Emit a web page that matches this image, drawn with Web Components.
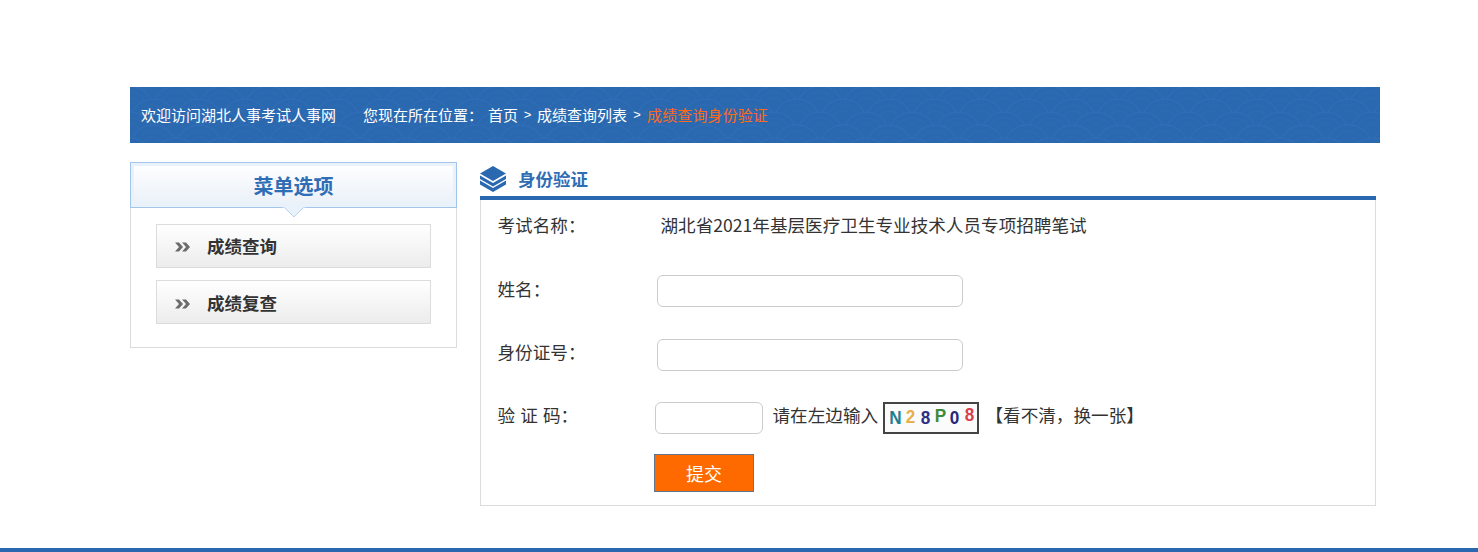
<!DOCTYPE html>
<html lang="zh-CN"><head><meta charset="utf-8">
<style>
html,body{margin:0;padding:0;background:#fff}
body{font-family:"Noto Sans CJK SC","Liberation Sans",sans-serif;color:#333;height:552px;overflow:hidden;display:flex;flex-direction:column}
</style></head><body>
<page-shell>
  <crumb-bar slot="top"></crumb-bar>
  <side-menu slot="side"></side-menu>
  <verify-panel slot="main"></verify-panel>
</page-shell>
<script>
function def(name, html){
  customElements.define(name, class extends HTMLElement{
    constructor(){super();this.attachShadow({mode:'open'}).innerHTML=html;}
  });
}
def('page-shell',`<style>
:host{display:flex;flex-direction:column;height:552px;box-sizing:border-box;padding-top:87px}
.wrap{width:1250px;margin-left:130px}
.cols{display:flex;margin-top:19px;align-items:flex-start}
.side{width:327px;margin-right:23px;flex:none}
.main{width:896px;flex:none}
.foot{margin-top:auto;height:4px;background:#2a68b0}
</style>
<div class="wrap"><slot name="top"></slot>
<div class="cols"><div class="side"><slot name="side"></slot></div><div class="main"><slot name="main"></slot></div></div></div>
<div class="foot"></div>`);

const sc=[[0,0],[46,0],[23,13],[0,26],[46,26],[23,39],[0,52],[46,52]].map(([x,y])=>
 `<circle cx="${x}" cy="${y}" r="23" fill="#2a68b0" stroke="#3070b9"/><circle cx="${x}" cy="${y}" r="17" stroke="#2d6bb4"/><circle cx="${x}" cy="${y}" r="11" stroke="#2d6bb4"/>`).join('');
def('crumb-bar',`<style>
:host{display:block;position:relative;height:56px;background:#2a68b0;color:#fff;font-size:15px;overflow:hidden}
svg{position:absolute;inset:0;width:100%;height:100%}
.t{position:relative;display:flex;box-sizing:border-box;height:56px;align-items:center;padding:0 0 2px 11px;white-space:nowrap}
.w{width:222px;flex:none}
.l{width:125px;flex:none}
.g{width:19px;text-align:center;flex:none;font-family:"Liberation Sans",sans-serif;font-size:13px}
.g.e{width:20px}
.o{color:#ff6a1a;letter-spacing:.12px}
</style>
<svg aria-hidden="true"><defs><pattern id="w" width="46" height="26" patternUnits="userSpaceOnUse" y="-4">
<g stroke-width="1" fill="none">${sc}</g></pattern></defs>
<rect width="100%" height="100%" fill="url(#w)"/></svg>
<div class="t"><span class="w">欢迎访问湖北人事考试人事网</span><span class="l">您现在所在位置：</span><span>首页</span><span class="g">&gt;</span><span>成绩查询列表</span><span class="g e">&gt;</span><span class="o">成绩查询身份验证</span></div>`);

def('menu-item',`<style>
:host{display:flex;align-items:center;box-sizing:border-box;width:275px;height:44px;margin-left:25px;border:1px solid #dcdcdc;background:linear-gradient(#fff,#ececec);color:#333;font-size:17.5px;font-weight:700}
svg{width:15px;height:10px;margin:3px 17px 0 18px;flex:none}
</style>
<svg viewBox="0 0 15 10"><path d="M0 .5h4L8 5 4 9.5H0L4 5zM7 .5h4L15 5l-4 4.5H7L11 5z" fill="#6b6b6b"/></svg><slot></slot>`);

def('side-menu',`<style>
:host{display:block;position:relative;box-sizing:border-box;height:186px;border:1px solid #dcdcdc;border-top:0}
.h{position:relative;box-sizing:border-box;height:46px;margin:0 -1px;border:1px solid #a3c5ea;box-shadow:inset 0 0 0 3px #e9f1fb;background:linear-gradient(#fff,#e9f0f8);text-align:center;color:#2f6db5;font-size:20px;font-weight:700;line-height:46px}
.a{position:absolute;left:151px;top:44px;width:24px;height:12px}
.list{display:flex;flex-direction:column;gap:12px;padding-top:16px}
</style>
<div class="h">菜单选项</div>
<svg class="a" viewBox="0 0 24 12"><path d="M1 0L12 11 23 0z" fill="#e9f1fb" stroke="#b7d2f0" stroke-width="1"/><path d="M0 0h24v1.4H0z" fill="#e9f1fb"/></svg>
<div class="list"><menu-item style="padding-bottom:1px">成绩查询</menu-item><menu-item>成绩复查</menu-item></div>`);

def('text-field',`<style>
:host{display:inline-block;line-height:0;margin-top:6.5px}
input{box-sizing:border-box;width:var(--w,306px);height:32px;margin:0;border:1px solid #ccc;border-radius:6px;background:#fff;outline:0;padding:0 8px}
</style><input type="text">`);

def('form-row',`<style>
:host{display:flex;align-items:center;height:32px;color:#333;font-size:17.6px;white-space:nowrap}
.l{width:var(--lw,159px);flex:none}
.c{display:flex;align-items:center}
</style><span class="l"><slot name="label"></slot></span><div class="c"><slot></slot></div>`);

def('captcha-box',`<style>
:host{display:flex;box-sizing:border-box;width:96px;height:32px;margin-top:6.5px;border:2px solid #444;background:#fbfbfb;padding-left:3px;font:700 19px/28px "Liberation Sans",sans-serif;overflow:hidden}
span{display:block;width:15px;text-align:center;position:relative;transform:scaleX(.9)}
</style><span style="color:#1f7f92;top:0">N</span><span style="color:#e8b04a;top:-1px">2</span><span style="color:#2e2d84;top:0">8</span><span style="color:#3f8a3a;top:-2px">P</span><span style="color:#27247a;top:0">0</span><span style="color:#d8404e;top:-3px">8</span>`);

def('verify-panel',`<style>
:host{display:block}
.t{display:flex;align-items:center;box-sizing:border-box;height:34px;padding-bottom:1px;color:#2f6db5;font-size:17.5px;font-weight:700}
.t svg{width:26px;height:26px;margin-right:12px;flex:none}
.b{box-sizing:border-box;height:306px;border:1px solid #dcdcdc;border-top:0}
.bar{height:4px;background:#2a68b0}
.f{display:flex;flex-direction:column;padding:8px 0 0 16.5px}
form-row{margin-bottom:31.67px}
form-row.a{margin-bottom:32px}
form-row.b2{margin-bottom:31.33px}
.sp{word-spacing:1.2px}
.hint{margin:0 5px 0 10px}
.sw{margin-left:6.4px}
.btn{box-sizing:border-box;width:100px;height:38px;margin:-8.67px 0 0 156.5px;border:1px solid #5f7590;background:#ff6a00;color:#fff;font:18px "Noto Sans CJK SC",sans-serif;padding:0}
</style>
<div class="t"><svg viewBox="0 0 26 26"><path d="M13 0L26 7.5 13 15 0 7.5z" fill="#2a68b0"/><path d="M0 9.4L13 16.9 26 9.4V13L13 20.5 0 13z" fill="#2a68b0"/><path d="M0 14.6L13 22.1 26 14.6V18.4L13 26 0 18.4z" fill="#2a68b0"/></svg><span>身份验证</span></div>
<div class="bar"></div>
<div class="b"><div class="f">
<form-row class="a" style="--lw:163px"><span slot="label">考试名称：</span><span>湖北省2021年基层医疗卫生专业技术人员专项招聘笔试</span></form-row>
<form-row class="b2"><span slot="label">姓名：</span><text-field></text-field></form-row>
<form-row><span slot="label">身份证号：</span><text-field></text-field></form-row>
<form-row style="--lw:157px"><span slot="label" class="sp">验 证 码：</span><text-field style="--w:108px"></text-field><span class="hint">请在左边输入</span><captcha-box></captcha-box><span class="sw">【看不清，换一张】</span></form-row>
<button class="btn" type="button">提交</button>
</div></div>`);
</script>
</body></html>
